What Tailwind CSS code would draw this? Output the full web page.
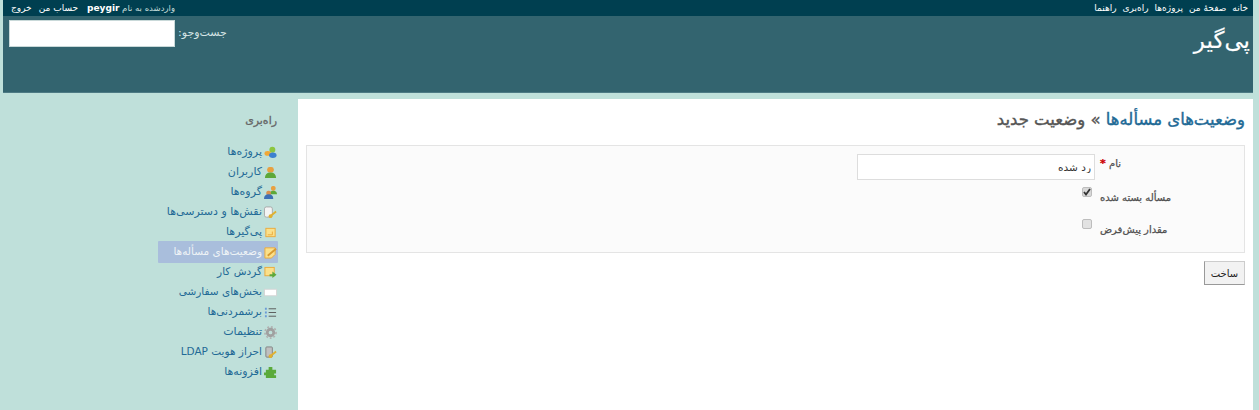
<!DOCTYPE html>
<html lang="fa" dir="rtl">
<head>
    <meta charset="UTF-8">
    <title>وضعیت جدید - پی‌گیر</title>
    <script src="https://cdn.jsdelivr.net/npm/@tailwindcss/browser@4"></script>
</head>
<body class="bg-[#bfe0da] h-[410px] w-[1259px] overflow-hidden font-['DejaVu_Sans',sans-serif] text-[#484848] text-[11px]">
    <div class="mr-[6px] ml-[3px] w-[1250px]">
        <!-- top menu -->
        <div class="bg-[#003f50] h-[16px] flex justify-between items-center pr-[5px] pl-[8px] text-[9px] text-white leading-none">
            <div class="flex gap-[6px]">
                <a>خانه</a><a>صفحهٔ من</a><a>پروژه‌ها</a><a>راه‌بری</a><a>راهنما</a>
            </div>
            <div class="flex gap-[9px]">
                <span class="text-[#c3dbd9] text-[8.5px]">واردشده به نام <b class="text-white text-[9px]">peygir</b></span>
                <div class="flex gap-[7px]"><a>حساب من</a><a>خروج</a></div>
            </div>
        </div>
        <!-- header -->
        <div class="bg-[#33646f] h-[77px] flex justify-between items-start pr-[3px] pl-[6px] text-white border-b border-[#4d7a84]">
            <h1 class="text-[23px] leading-[36px] font-normal [-webkit-text-stroke:0.2px_#fff] mt-[5px] font-['Noto_Sans','DejaVu_Sans',sans-serif]">پی‌گیر</h1>
            <div class="flex items-start gap-[3px] mt-[4px] text-[11px] text-[#d6e5e5]">
                <label class="leading-[26px]">جست‌وجو:</label>
                <input type="text" class="bg-white w-[166px] h-[27px] border border-[#c9d9d9]">
            </div>
        </div>
        <!-- main -->
        <div class="flex">
            <div class="bg-white w-[955px] h-[317px] mt-[6px] pt-[8px] px-[8px]">
                <h2 class="text-[16.500px] leading-[26px] font-normal [-webkit-text-stroke:0.4px] text-[#555]"><a class="text-[#1f6a96]">وضعیت‌های مسأله‌ها</a> » وضعیت جدید</h2>
                <form class="mt-[12px]">
                    <div class="bg-[#fbfbfb] border border-[#e4e4e4] h-[108px] pt-[8px]">
                        <div class="flex items-start h-[26px]">
                            <label class="w-[149px] pl-[5px] text-left [-webkit-text-stroke:0.25px] text-[10px] text-[#505050] leading-[20px]">نام <span class="text-[#cc0000] text-[11px] font-bold">*</span></label>
                            <input type="text" value="رد شده" class="w-[238px] h-[26px] bg-white border border-[#dddddd] px-[3px] text-[10.500px] text-[#333]">
                        </div>
                        <div class="flex items-start mt-[6px] h-[32px]">
                            <label class="w-[149px] pl-[5px] text-left [-webkit-text-stroke:0.25px] text-[10px] text-[#505050] leading-[14px] mt-[5px]" dir="ltr">
                                <span dir="rtl">مسأله بسته شده</span>
                            </label>
                            <span class="relative w-[10px] h-[10px] mr-[3px] mt-[1px] bg-[#d8d8d8] border border-[#bdbdbd] rounded-[2px]">
                                <svg class="absolute -top-[1px] -right-[1px]" width="10" height="10" viewBox="0 0 10 10"><path d="M2 5 L4 7.500 L8 2" fill="none" stroke="#333" stroke-width="1.800"/></svg>
                            </span>
                        </div>
                        <div class="flex items-start h-[32px]">
                            <label class="w-[149px] pl-[5px] text-left [-webkit-text-stroke:0.25px] text-[10px] text-[#505050] leading-[14px] mt-[5px]" dir="ltr">
                                <span dir="rtl">مقدار پیش‌فرض</span>
                            </label>
                            <span class="w-[10px] h-[10px] mr-[3px] mt-[1px] bg-[#e2e2e2] border border-[#bdbdbd] rounded-[2px]"></span>
                        </div>
                    </div>
                    <button type="button" class="mt-[8px] w-[41px] h-[24px] bg-[#f2f2f2] border border-[#cccccc] border-b-[#999] border-l-[#999] text-[10px] text-[#222]">ساخت</button>
                </form>
            </div>
            <!-- sidebar -->
            <div class="flex-1 pt-[20px] pl-[19px] pr-[20px]">
                <h3 class="text-[11px] leading-[16px] font-normal [-webkit-text-stroke:0.3px_#666] text-[#666] pr-[1px]">راه‌بری</h3>
                <ul class="mt-[13px] text-[11px] text-[#1f6a96]">
                    <li class="h-[20px] flex items-center gap-[2px] pr-[1px]">
                        <svg width="13" height="13" viewBox="0 0 14 14"><circle cx="9" cy="4" r="3.200" fill="#8cc63f"/><ellipse cx="4" cy="8" rx="3.500" ry="2.500" fill="#f0a838"/><ellipse cx="9.500" cy="10" rx="4" ry="3" fill="#3d80d0"/></svg>
                        <span>پروژه‌ها</span>
                    </li>
                    <li class="h-[20px] flex items-center gap-[2px] pr-[1px]">
                        <svg width="13" height="13" viewBox="0 0 14 14"><rect x="3.500" y="1" width="7" height="6" rx="2.500" fill="#e8a040"/><path d="M1 13 Q1 7 7 7 Q13 7 13 13Z" fill="#5da83a"/></svg>
                        <span>کاربران</span>
                    </li>
                    <li class="h-[20px] flex items-center gap-[2px] pr-[1px]">
                        <svg width="13" height="13" viewBox="0 0 14 14"><rect x="7.500" y="0" width="5" height="5" rx="2" fill="#e8a040"/><path d="M6 9 Q6 5 10 5 Q14 5 14 9Z" fill="#5da83a"/><rect x="2.500" y="5" width="5" height="5" rx="2" fill="#d89050"/><path d="M0 14 Q0 9 5 9 Q10 9 10 14Z" fill="#3d6fb5"/></svg>
                        <span>گروه‌ها</span>
                    </li>
                    <li class="h-[20px] flex items-center gap-[2px] pr-[1px]">
                        <svg width="13" height="13" viewBox="0 0 14 14"><rect x="0.500" y="1" width="8.500" height="11" rx="2" fill="#f4f4f4" stroke="#a8a8a8"/><circle cx="7" cy="11" r="2" fill="#e0b030"/><path d="M8 10 L13 6" stroke="#e0b030" stroke-width="2"/></svg>
                        <span>نقش‌ها و دسترسی‌ها</span>
                    </li>
                    <li class="h-[20px] flex items-center gap-[2px] pr-[1px]">
                        <svg width="13" height="13" viewBox="0 0 14 14"><rect x="2" y="2.500" width="10" height="9" fill="#fbe08a" stroke="#eaa93a"/><path d="M4 9.500h5V6" fill="none" stroke="#eaa93a"/></svg>
                        <span>پی‌گیرها</span>
                    </li>
                    <li class="h-[22px] -my-[1px] flex items-center gap-[2px] pr-[1px] w-[120px] bg-[#a9bedc] text-[#eef3f6] text-[10.500px] rounded-[1px]">
                        <svg width="13" height="13" viewBox="0 0 14 14"><path d="M1 2h11v7l-4 4H1z" fill="#fbe08a" stroke="#eaa93a"/><path d="M4 10.500 L13 3" stroke="#d89a30" stroke-width="2"/></svg>
                        <span>وضعیت‌های مسأله‌ها</span>
                    </li>
                    <li class="h-[20px] flex items-center gap-[2px] pr-[1px] text-[10.500px]">
                        <svg width="13" height="13" viewBox="0 0 14 14"><rect x="1" y="1.500" width="10" height="9" fill="#fbe08a" stroke="#eaa93a"/><path d="M6 9h3V6l4.500 3.500L9 13v-2H6z" fill="#5da83a"/></svg>
                        <span>گردش کار</span>
                    </li>
                    <li class="h-[20px] flex items-center gap-[2px] pr-[1px] text-[10.500px]">
                        <svg width="13" height="13" viewBox="0 0 14 14"><rect x="0.500" y="3.500" width="13" height="7" fill="#ffffff" stroke="#d5d5d5"/></svg>
                        <span>بخش‌های سفارشی</span>
                    </li>
                    <li class="h-[20px] flex items-center gap-[2px] pr-[1px] text-[10.500px]">
                        <svg width="13" height="13" viewBox="0 0 14 14"><path d="M1 3h2M1 7h2M1 11h2" stroke="#6a9ad8" stroke-width="2"/><path d="M5 3h8M5 7h8M5 11h8" stroke="#555" stroke-width="1"/></svg>
                        <span>برشمردنی‌ها</span>
                    </li>
                    <li class="h-[20px] flex items-center gap-[2px] pr-[1px]">
                        <svg width="13" height="13" viewBox="0 0 14 14"><circle cx="7" cy="7" r="3.500" fill="none" stroke="#a0a0a0" stroke-width="3"/><circle cx="7" cy="7" r="6" fill="none" stroke="#b0b0b0" stroke-width="1.800" stroke-dasharray="2 2"/></svg>
                        <span>تنظیمات</span>
                    </li>
                    <li class="h-[20px] flex items-center gap-[2px] pr-[1px] text-[10.500px]">
                        <svg width="13" height="13" viewBox="0 0 14 14"><rect x="2" y="1" width="7" height="11" rx="1" fill="#c0c0c0" stroke="#808080"/><circle cx="7" cy="11" r="2" fill="#e0b030"/><path d="M8 10 L13 6" stroke="#e0b030" stroke-width="2"/></svg>
                        <span>احراز هویت LDAP</span>
                    </li>
                    <li class="h-[20px] flex items-center gap-[2px] pr-[1px]">
                        <svg width="13" height="13" viewBox="0 0 14 14"><path d="M5 1h4v3h4v4h-2v2h2v3H2v-3H0V7h2V4h3z" fill="#5aaa3a"/></svg>
                        <span>افزونه‌ها</span>
                    </li>
                </ul>
            </div>
        </div>
    </div>
</body>
</html>
